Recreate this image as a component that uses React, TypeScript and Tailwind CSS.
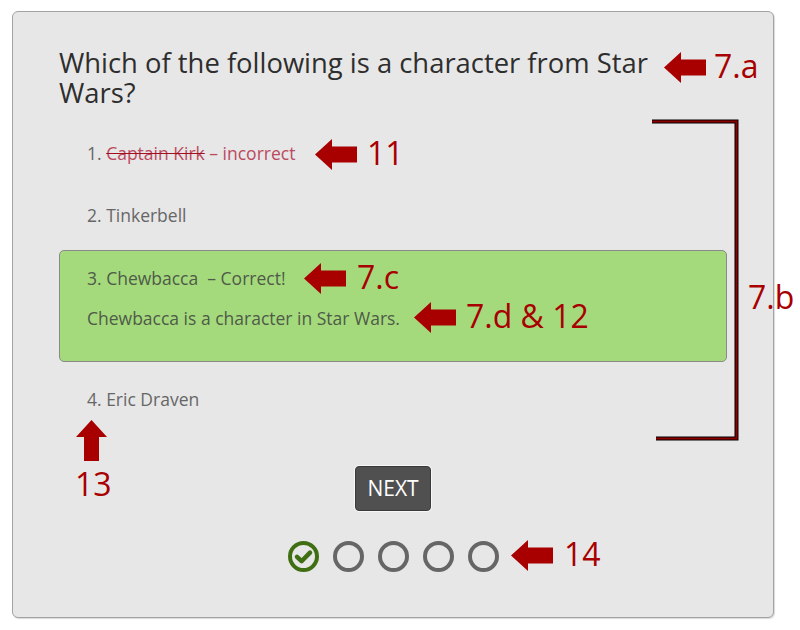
import { ReactNode } from 'react';

type Pos = { left: number; top: number };

function LeftArrow({ left, top }: Pos) {
  return (
    <svg className="absolute" style={{ left, top }} width="42" height="31" viewBox="0 0 42 31">
      <polygon points="0,15.5 17,0 17,7.5 42,7.5 42,23.5 17,23.5 17,31" fill="#a80000" />
    </svg>
  );
}

function Label({ left, top, children }: Pos & { children: ReactNode }) {
  return (
    <span className="absolute whitespace-nowrap text-[32px] leading-[40px] text-[#a80000]" style={{ left, top }}>
      {children}
    </span>
  );
}

function Progress() {
  return (
    <div className="flex items-center justify-center gap-[14px]">
      <svg width="31" height="31" viewBox="0 0 31 31">
        <circle cx="15.5" cy="15.5" r="13.5" fill="none" stroke="#3f6f12" strokeWidth="4" />
        <path d="M9 15.8 L13.6 20.2 L22 11.6" fill="none" stroke="#3f6f12" strokeWidth="4.5" strokeLinecap="round" strokeLinejoin="round" />
      </svg>
      {[1, 2, 3, 4].map((n) => (
        <svg key={n} width="31" height="31" viewBox="0 0 31 31">
          <circle cx="15.5" cy="15.5" r="13.5" fill="none" stroke="#666666" strokeWidth="4" />
        </svg>
      ))}
    </div>
  );
}

export default function App() {
  return (
    <div className="relative h-[630px] w-[800px] bg-white pl-[12px] pt-[11px] font-['Open_Sans',sans-serif]">
      <div className="flex h-[607px] w-[762px] flex-col rounded-[6px] border border-[#a3a3a3] bg-[#e7e7e7] px-[46px] shadow-[1px_1px_1px_rgba(0,0,0,0.15)]">
        <h1 className="mt-[36px] pr-[60px] text-[27.4px] leading-[30px] text-[#2e2e2e]">
          Which of the following is a character from Star Wars?
        </h1>

        <div className="mt-[33px] pl-[28px] text-[17.5px] leading-[24px] text-[#666]">
          1.{' '}
          <span className="text-[#bb4a60] line-through decoration-[#a01020]">Captain Kirk</span>
          <span className="text-[#bb4a60]"> – incorrect</span>
        </div>

        <div className="mt-[38px] pl-[28px] text-[17.5px] leading-[24px] text-[#666]">2. Tinkerbell</div>

        <div className="mt-[23px] flex h-[112px] flex-col gap-[16px] rounded-[5px] border border-[#8a8a8a] bg-[#a4da7c] pl-[27px] pt-[15px] text-[17.5px] leading-[24px] text-[#4f5a48]">
          <div>3. Chewbacca&nbsp; – Correct!</div>
          <div>Chewbacca is a character in Star Wars.</div>
        </div>

        <div className="mt-[25px] pl-[28px] text-[17.5px] leading-[24px] text-[#666]">4. Eric Draven</div>

        <div className="mt-[55px] flex justify-center">
          <button
            type="button"
            className="h-[45px] w-[76px] rounded-[4px] border border-[#3a3a3a] bg-[#505050] text-[21px] text-white shadow-[0_0_0_1px_#f7f7f7]"
          >
            NEXT
          </button>
        </div>

        <div className="mt-[30px]">
          <Progress />
        </div>
      </div>

      {/* annotations */}
      <LeftArrow left={664} top={52} />
      <Label left={714} top={46}>7.a</Label>

      <LeftArrow left={315} top={139} />
      <Label left={367} top={133}>11</Label>

      <LeftArrow left={304} top={263} />
      <Label left={357} top={257}>7.c</Label>

      <LeftArrow left={414} top={302} />
      <Label left={466} top={296}>7.d &amp; 12</Label>

      <svg className="absolute left-[76px] top-[420px]" width="31" height="41" viewBox="0 0 31 41">
        <polygon points="15.5,0 31,17 23,17 23,41 8,41 8,17 0,17" fill="#a80000" />
      </svg>
      <Label left={75} top={464}>13</Label>

      <LeftArrow left={511} top={540} />
      <Label left={564} top={534}>14</Label>

      <svg className="absolute left-[650px] top-[118px]" width="90" height="324" viewBox="0 0 90 324">
        <path d="M2 3.5 H86.5 V320.5 H6" fill="none" stroke="#000" strokeWidth="4" />
        <path d="M2 3.5 H86.5 V320.5 H6" fill="none" stroke="#8c0000" strokeWidth="2" />
      </svg>
      <Label left={748} top={277}>7.b</Label>
    </div>
  );
}
